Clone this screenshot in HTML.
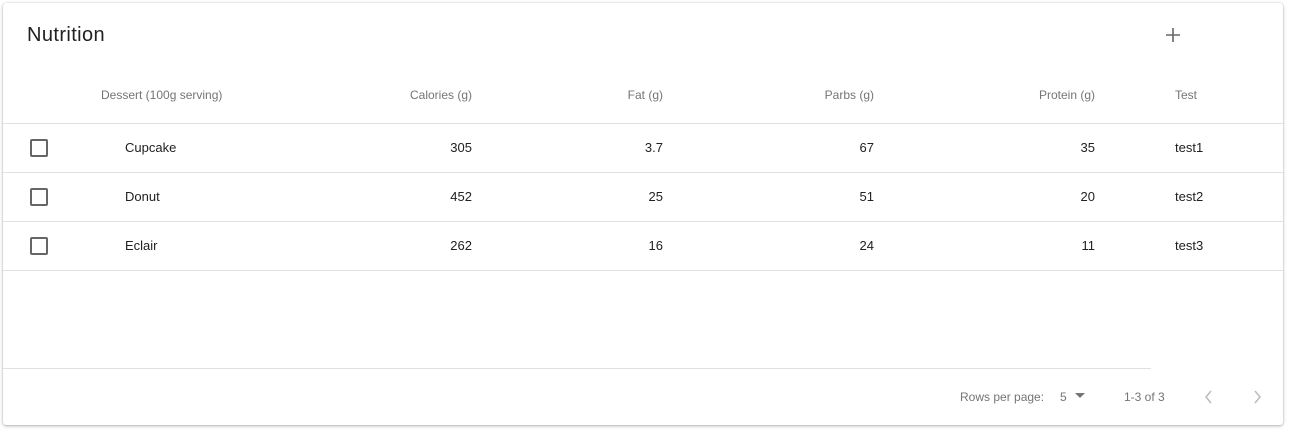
<!DOCTYPE html>
<html><head><meta charset="utf-8"><style>
*{margin:0;padding:0;box-sizing:border-box}
body{width:1293px;height:430px;background:#fff;font-family:"Liberation Sans",Arial,sans-serif;position:relative;overflow:hidden}
.card{position:absolute;left:3px;top:3px;width:1280px;height:422px;background:#fff;border-radius:3px;box-shadow:0 1px 3px rgba(0,0,0,.3),0 0 1px rgba(0,0,0,.2)}
.t{position:absolute;white-space:nowrap}
.h{font-size:12px;color:#757575;top:88px}
.c{font-size:13px;color:#212121}
.r{text-align:right}
.line{position:absolute;left:3px;width:1280px;height:1px;background:#e0e0e0}
.cb{position:absolute;left:30px;width:18px;height:18px;border:2px solid #666;border-radius:2px}
</style></head><body>
<div class="card"></div>
<div class="t" style="left:27px;top:24px;font-size:20px;letter-spacing:0.4px;color:#212121">Nutrition</div>
<svg style="position:absolute;left:1165px;top:27px" width="16" height="16" viewBox="0 0 16 16"><path d="M8 1v14M1 8h14" stroke="#666" stroke-width="1.6"/></svg>
<div class="t h" style="left:101px">Dessert (100g serving)</div>
<div class="t h r" style="right:821px">Calories (g)</div>
<div class="t h r" style="right:630px">Fat (g)</div>
<div class="t h r" style="right:419px">Parbs (g)</div>
<div class="t h r" style="right:198px">Protein (g)</div>
<div class="t h" style="left:1175px">Test</div>
<div class="line" style="top:123px"></div>
<div class="line" style="top:172px"></div>
<div class="line" style="top:221px"></div>
<div class="line" style="top:270px"></div>
<div class="line" style="top:368px;width:1148px"></div>

<div class="cb" style="top:139px"></div>
<div class="t c" style="left:125px;top:140px">Cupcake</div>
<div class="t c r" style="right:821px;top:140px">305</div>
<div class="t c r" style="right:630px;top:140px">3.7</div>
<div class="t c r" style="right:419px;top:140px">67</div>
<div class="t c r" style="right:198px;top:140px">35</div>
<div class="t c" style="left:1175px;top:140px">test1</div>

<div class="cb" style="top:188px"></div>
<div class="t c" style="left:125px;top:189px">Donut</div>
<div class="t c r" style="right:821px;top:189px">452</div>
<div class="t c r" style="right:630px;top:189px">25</div>
<div class="t c r" style="right:419px;top:189px">51</div>
<div class="t c r" style="right:198px;top:189px">20</div>
<div class="t c" style="left:1175px;top:189px">test2</div>

<div class="cb" style="top:237px"></div>
<div class="t c" style="left:125px;top:238px">Eclair</div>
<div class="t c r" style="right:821px;top:238px">262</div>
<div class="t c r" style="right:630px;top:238px">16</div>
<div class="t c r" style="right:419px;top:238px">24</div>
<div class="t c r" style="right:198px;top:238px">11</div>
<div class="t c" style="left:1175px;top:238px">test3</div>

<div class="t" style="left:960px;top:390px;font-size:12px;color:#757575">Rows per page:</div>
<div class="t" style="left:1060px;top:390px;font-size:12px;color:#757575">5</div>
<svg style="position:absolute;left:1075px;top:393px" width="10" height="6"><path d="M0 0h10L5 5z" fill="#757575"/></svg>
<div class="t" style="left:1124px;top:390px;font-size:12px;color:#757575">1-3 of 3</div>
<svg style="position:absolute;left:1204px;top:390px" width="10" height="14"><path d="M7 1L2 7l5 6" stroke="#bdbdbd" stroke-width="1.6" fill="none"/></svg>
<svg style="position:absolute;left:1252px;top:390px" width="10" height="14"><path d="M3 1l5 6-5 6" stroke="#bdbdbd" stroke-width="1.6" fill="none"/></svg>
</body></html>
